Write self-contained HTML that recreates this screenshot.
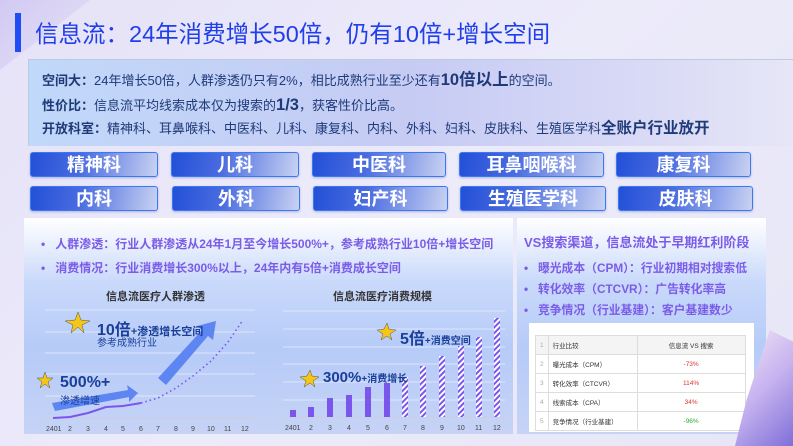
<!DOCTYPE html>
<html><head><meta charset="utf-8"><style>
*{margin:0;padding:0;box-sizing:border-box}
body{width:793px;height:446px;overflow:hidden;position:relative;font-family:"Liberation Sans","Noto Sans CJK SC",sans-serif;background:linear-gradient(135deg,#e6e2f8 0%,#ecebfa 50%,#e7e6f6 100%)}
.abs{position:absolute}
.title{left:35px;top:15px;font-size:23.5px;color:#1f3fea;white-space:nowrap}
.info{left:28px;top:59px;width:765px;height:87px;background:linear-gradient(90deg,#c0d8f9 0%,#c6cbf4 50%,#dcdcf6 85%,#e7e6f7 100%);border-top:1px solid #bcd;border-left:1px solid #bcd}
.info div{position:absolute;left:13px;font-size:13px;color:#1e3a78;white-space:nowrap;line-height:20px}
.info b{font-weight:bold}
.btn{position:absolute;height:25px;border:1px solid #3a7af0;border-radius:3px;background:linear-gradient(100deg,#2350d8 0%,#4a6ce0 40%,#c9d2f2 100%);color:#fff;font-weight:bold;font-size:18px;text-align:center;line-height:25px;box-shadow:0 1px 2px rgba(40,60,160,.3)}
.panel{background:linear-gradient(180deg,#ffffff 0%,#c9d9fb 30%,#b6cbf8 60%,#c6d3f6 100%)}
.pl{font-size:12px;font-weight:bold;color:#7b5ce8;white-space:nowrap;position:absolute}
.ct{font-size:11px;font-weight:bold;color:#333;position:absolute;white-space:nowrap}
table{border-collapse:collapse;font-size:6.5px;color:#333}
td{border:1px solid #ddd;height:19px;padding:0 4px}
</style></head><body>
<div class="abs" style="left:0;top:0;width:90px;height:70px;background:linear-gradient(135deg,#c9bff0,#e6e2f8);clip-path:polygon(0 0,90px 0,0 70px);opacity:.7"></div>
<div class="abs" style="left:15px;top:13px;width:6px;height:39px;background:#1f4cf5"></div>
<div class="abs title">信息流：24年消费增长50倍，仍有10倍+增长空间</div>
<div class="abs info">
<div style="top:10px"><b>空间大：</b>24年增长50倍，人群渗透仍只有2%，相比成熟行业至少还有<b style="font-size:16.5px">10倍以上</b>的空间。</div>
<div style="top:35px"><b>性价比：</b>信息流平均线索成本仅为搜索的<b style="font-size:16.5px">1/3</b>，获客性价比高。</div>
<div style="top:59px"><b>开放科室：</b>精神科、耳鼻喉科、中医科、儿科、康复科、内科、外科、妇科、皮肤科、生殖医学科<b style="font-size:15.5px">全账户行业放开</b></div>
</div>
<div class="btn" style="left:30px;top:152px;width:128px">精神科</div>
<div class="btn" style="left:171px;top:152px;width:128px">儿科</div>
<div class="btn" style="left:312px;top:152px;width:134px">中医科</div>
<div class="btn" style="left:459px;top:152px;width:145px">耳鼻咽喉科</div>
<div class="btn" style="left:616px;top:152px;width:135px">康复科</div>
<div class="btn" style="left:30px;top:186px;width:128px">内科</div>
<div class="btn" style="left:172px;top:186px;width:128px">外科</div>
<div class="btn" style="left:313px;top:186px;width:135px">妇产科</div>
<div class="btn" style="left:460px;top:186px;width:146px">生殖医学科</div>
<div class="btn" style="left:618px;top:186px;width:135px">皮肤科</div>

<div class="abs panel" style="left:24px;top:218px;width:489px;height:216px"></div>
<div class="pl" style="left:41px;top:235px">•&nbsp;&nbsp;&nbsp;人群渗透：行业人群渗透从24年1月至今增长500%+，参考成熟行业10倍+增长空间</div>
<div class="pl" style="left:41px;top:259px">•&nbsp;&nbsp;&nbsp;消费情况：行业消费增长300%以上，24年内有5倍+消费成长空间</div>
<div class="ct" style="left:106px;top:288px">信息流医疗人群渗透</div>
<div class="ct" style="left:333px;top:288px">信息流医疗消费规模</div>
<svg class="abs" style="left:0;top:0" width="793" height="446">
<g stroke="#dde6fb" stroke-width="1">
<line x1="45" y1="310" x2="255" y2="310"/><line x1="45" y1="332" x2="255" y2="332"/><line x1="45" y1="353" x2="255" y2="353"/><line x1="45" y1="374" x2="255" y2="374"/><line x1="45" y1="396" x2="255" y2="396"/><line x1="45" y1="418" x2="255" y2="418" stroke="#ccd"/>
<line x1="283" y1="311" x2="505" y2="311"/><line x1="283" y1="329" x2="505" y2="329"/><line x1="283" y1="347" x2="505" y2="347"/><line x1="283" y1="364" x2="505" y2="364"/><line x1="283" y1="382" x2="505" y2="382"/><line x1="283" y1="400" x2="505" y2="400"/><line x1="283" y1="417" x2="505" y2="417" stroke="#ccd"/>
</g>
<polygon points="52,403 128,390 127,385 138,393 129,402 129,397 55,411" fill="#5d86f2"/>
<polygon points="158,378 202,330 197,326 216,321 213,340 208,336 166,385" fill="#5d86f2"/>
<polyline points="53,418 70,417 88,413 106,407 123,406 141,403" fill="none" stroke="#7b56ec" stroke-width="2"/>
<polyline points="141,403 158,398 176,388 193,376 211,361 228,342 243,320" fill="none" stroke="#7b56ec" stroke-width="1.6" stroke-dasharray="1.5,3"/>
<defs><pattern id="h" width="4" height="4" patternUnits="userSpaceOnUse" patternTransform="rotate(45)"><rect width="2" height="4" fill="#7b56ec"/><rect x="2" width="2" height="4" fill="#fff"/></pattern></defs>
<g fill="#7b56ec">
<rect x="290" y="410" width="6" height="7"/><rect x="308" y="407" width="6" height="10"/><rect x="327" y="398" width="6" height="19"/><rect x="346" y="395" width="6" height="22"/><rect x="365" y="387" width="6" height="30"/><rect x="384" y="383" width="6" height="34"/>
</g>
<g fill="url(#h)">
<rect x="402" y="377" width="6" height="40"/><rect x="420" y="366" width="6" height="51"/><rect x="439" y="356" width="6" height="61"/><rect x="458" y="346" width="6" height="71"/><rect x="476" y="337" width="6" height="80"/><rect x="494" y="318" width="6" height="99"/>
</g>
<g fill="#f5c518" stroke="#555" stroke-width=".5">
<polygon points="78,312 81,320 90,321 82,325 84,333 78,327 71,333 73,325 65,321 75,320"/>
<polygon points="45,372 47,378 53,378 48,382 50,388 45,384 40,388 42,382 37,378 43,378"/>
<polygon points="387,323 389,329 396,330 390,334 392,340 387,336 381,340 383,334 377,330 384,329"/>
<polygon points="310,370 312,376 319,377 313,381 315,387 310,383 304,387 306,381 300,377 307,376"/>
</g>
<g font-size="7" fill="#444" font-family="Liberation Sans">
<text x="46" y="431">2401</text><text x="68" y="431">2</text><text x="86" y="431">3</text><text x="104" y="431">4</text><text x="121" y="431">5</text><text x="139" y="431">6</text><text x="156" y="431">7</text><text x="174" y="431">8</text><text x="191" y="431">9</text><text x="207" y="431">10</text><text x="224" y="431">11</text><text x="241" y="431">12</text>
<text x="285" y="430">2401</text><text x="309" y="430">2</text><text x="328" y="430">3</text><text x="347" y="430">4</text><text x="366" y="430">5</text><text x="385" y="430">6</text><text x="403" y="430">7</text><text x="421" y="430">8</text><text x="440" y="430">9</text><text x="457" y="430">10</text><text x="475" y="430">11</text><text x="493" y="430">12</text>
</g>
</svg>
<div class="abs" style="left:97px;top:316px;color:#1a3f9a;font-weight:bold;font-size:16px;white-space:nowrap">10倍<span style="font-size:11px">+渗透增长空间</span></div>
<div class="abs" style="left:97px;top:334px;color:#1a3f9a;font-size:10px">参考成熟行业</div>
<div class="abs" style="left:60px;top:374px;color:#1a3f9a;font-weight:bold;font-size:16px">500%+</div>
<div class="abs" style="left:60px;top:392px;color:#1a3f9a;font-size:10px">渗透增速</div>
<div class="abs" style="left:400px;top:325px;color:#1a3f9a;font-weight:bold;font-size:16px;white-space:nowrap">5倍<span style="font-size:10px">+消费空间</span></div>
<div class="abs" style="left:323px;top:369px;color:#1a3f9a;font-weight:bold;font-size:15px;white-space:nowrap">300%<span style="font-size:10px">+消费增长</span></div>

<div class="abs panel" style="left:517px;top:218px;width:249px;height:216px"></div>
<div class="pl" style="left:524px;top:232px;font-size:13px">VS搜索渠道，信息流处于早期红利阶段</div>
<div class="pl" style="left:524px;top:259px;font-size:11.8px">•&nbsp;&nbsp;&nbsp;曝光成本（CPM）：行业初期相对搜索低</div>
<div class="pl" style="left:524px;top:280px;font-size:11.8px">•&nbsp;&nbsp;&nbsp;转化效率（CTCVR）：广告转化率高</div>
<div class="pl" style="left:524px;top:301px;font-size:11.8px">•&nbsp;&nbsp;&nbsp;竞争情况（行业基建）：客户基建数少</div>
<div class="abs" style="left:529px;top:323px;width:225px;height:109px;background:#fff;padding:12px 0 0 6px">
<table><tr style="background:#f4f4f4"><td style="width:8px;color:#aaa">1</td><td style="width:89px">行业比较</td><td style="width:108px;text-align:center">信息流 VS 搜索</td></tr>
<tr><td style="color:#aaa">2</td><td>曝光成本（CPM）</td><td style="text-align:center;color:#d33">-73%</td></tr>
<tr><td style="color:#aaa">3</td><td>转化效率（CTCVR）</td><td style="text-align:center;color:#d33">114%</td></tr>
<tr><td style="color:#aaa">4</td><td>线索成本（CPA）</td><td style="text-align:center;color:#d33">34%</td></tr>
<tr><td style="color:#aaa">5</td><td>竞争情况（行业基建）</td><td style="text-align:center;color:#3a3">-96%</td></tr></table>
</div>
<div class="abs" style="left:735px;top:330px;width:58px;height:116px;background:linear-gradient(135deg,#f6e8f6,#c7b3ef 50%,#7f6fd8);clip-path:polygon(60% 0,100% 10%,100% 100%,0 100%,20% 60%)"></div>
</body></html>
